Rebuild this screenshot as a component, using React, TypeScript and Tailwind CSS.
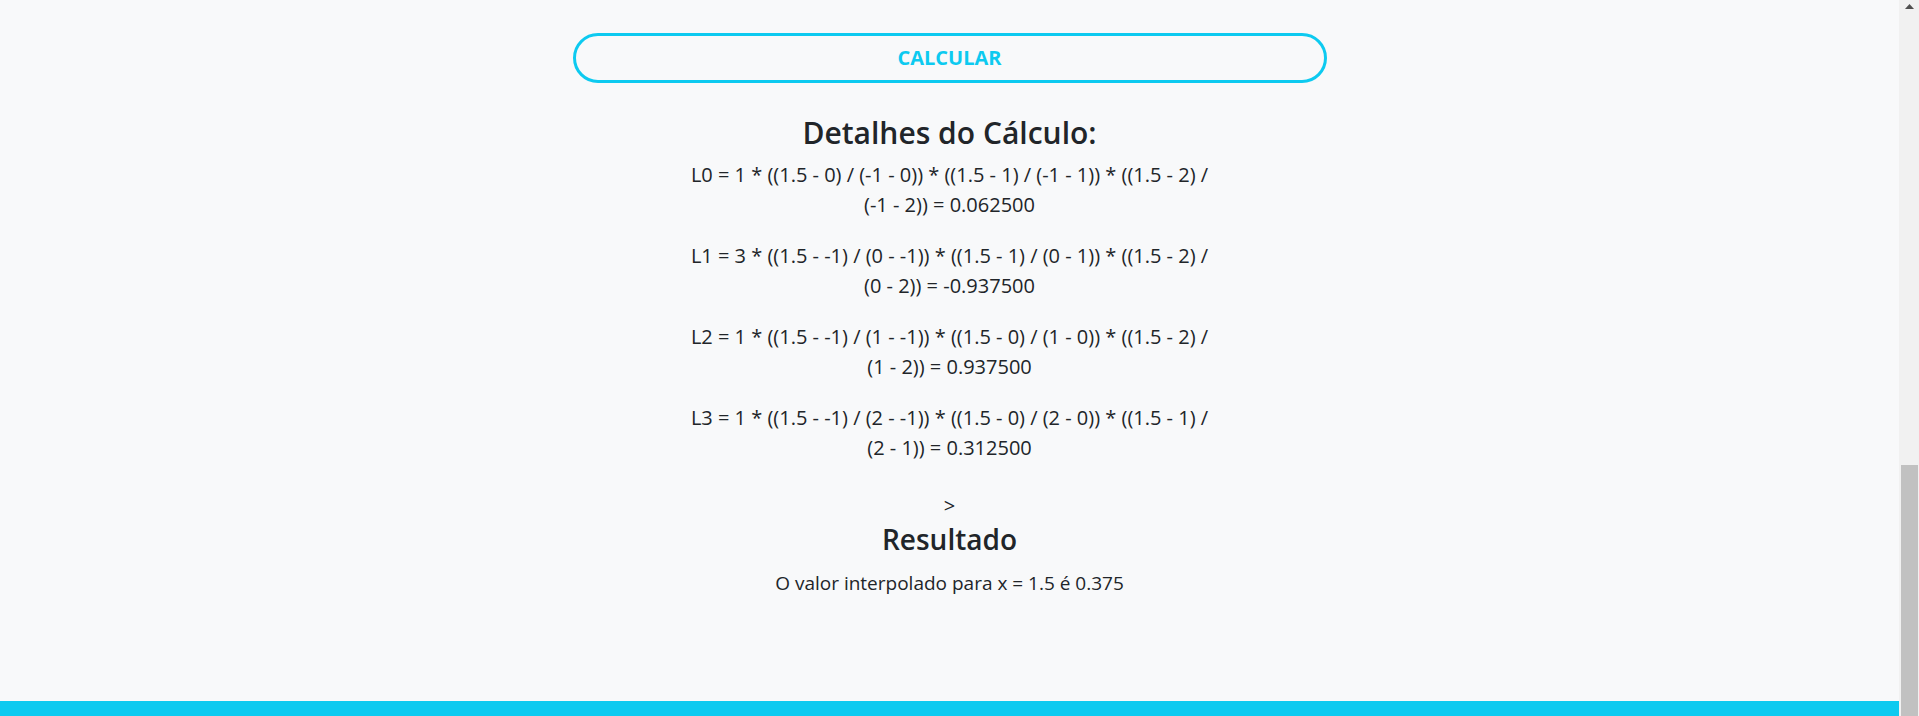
const lines: [string, string][] = [
  ['L0 = 1 * ((1.5 - 0) / (-1 - 0)) * ((1.5 - 1) / (-1 - 1)) * ((1.5 - 2) /', '(-1 - 2)) = 0.062500'],
  ['L1 = 3 * ((1.5 - -1) / (0 - -1)) * ((1.5 - 1) / (0 - 1)) * ((1.5 - 2) /', '(0 - 2)) = -0.937500'],
  ['L2 = 1 * ((1.5 - -1) / (1 - -1)) * ((1.5 - 0) / (1 - 0)) * ((1.5 - 2) /', '(1 - 2)) = 0.937500'],
  ['L3 = 1 * ((1.5 - -1) / (2 - -1)) * ((1.5 - 0) / (2 - 0)) * ((1.5 - 1) /', '(2 - 1)) = 0.312500'],
];

function Scrollbar() {
  return (
    <div className="flex w-[20px] shrink-0 flex-col bg-[#f1f1f1]">
      <div className="flex h-[17px] items-start justify-center pt-[4px]">
        <svg width="9" height="5" viewBox="0 0 9 5">
          <path d="M4.5 0 L9 5 L0 5 Z" fill="#505050" />
        </svg>
      </div>
      <div className="flex-1" />
      <div className="ml-[2px] mr-[1px] h-[251px] bg-[#c1c1c1]" />
    </div>
  );
}

export default function App() {
  return (
    <div className="flex h-[716px] w-full overflow-hidden bg-[#f8f9fa] font-['Open_Sans',sans-serif] text-[#212529]">
      <div className="flex flex-1 flex-col">
        <main className="flex flex-1 flex-col items-center">
          <button className="mt-[33px] h-[50px] w-[754px] rounded-full border-[3px] border-[#0dcaf0] text-[20px] font-bold uppercase text-[#0dcaf0]">
            Calcular
          </button>

          <h3 className="mt-[32px] text-[30px] leading-[36px] font-semibold">Detalhes do Cálculo:</h3>

          <div className="mt-[9px] flex flex-col items-center gap-[21px] text-[20px] leading-[30px]">
            {lines.map(([a, b]) => (
              <div key={a} className="flex flex-col items-center">
                <span className="whitespace-nowrap">{a}</span>
                <span className="whitespace-nowrap">{b}</span>
              </div>
            ))}
          </div>

          <div className="mt-[28px] text-[20px] leading-[30px]">&gt;</div>
          <h2 className="mt-[0px] text-[28px] leading-[36px] font-semibold">Resultado</h2>
          <p className="mt-[11px] text-[19px] leading-[30px]">O valor interpolado para x = 1.5 é 0.375</p>
        </main>
        <footer className="h-[15px] bg-[#0dcaf0]" />
      </div>
      <Scrollbar />
    </div>
  );
}
